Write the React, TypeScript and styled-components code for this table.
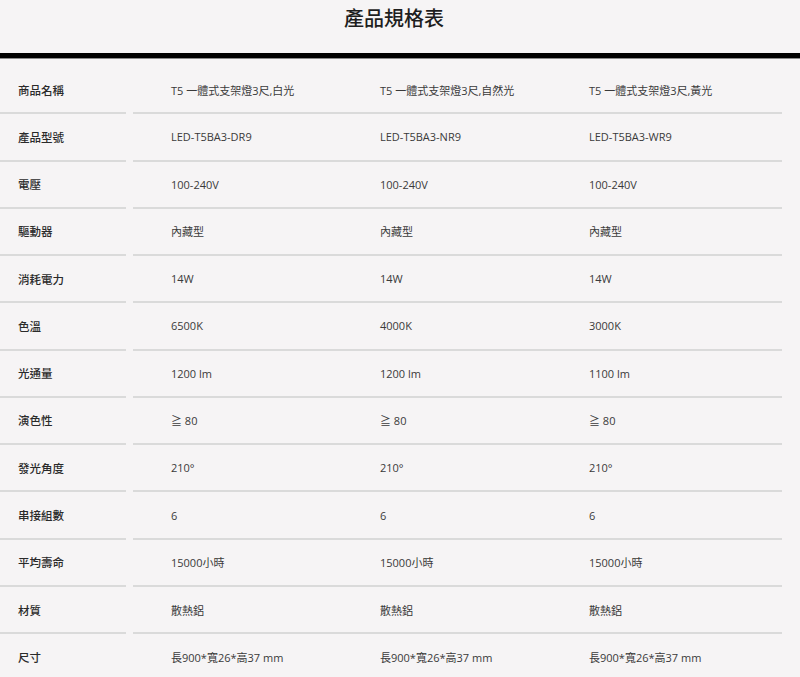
import React from "react";
import styled, { createGlobalStyle } from "styled-components";

const GlobalStyle = createGlobalStyle`
  html, body {
    margin: 0;
    padding: 0;
    background: #f6f4f5;
  }
  body {
    font-family: "Open Sans", "Noto Sans CJK TC", sans-serif;
    color: #333;
  }
`;

const Page = styled.div`
  width: 800px;
  display: flex;
  flex-direction: column;
`;

const Title = styled.h1`
  margin: 0 0 17px 0;
  height: 36px;
  line-height: 36px;
  width: 788px;
  text-align: center;
  font-family: "Noto Sans CJK TC", sans-serif;
  font-size: 20px;
  font-weight: 500;
  color: #1e1e1e;
`;

const Bar = styled.div`
  height: 5px;
  background: #000;
  border-bottom: 1px solid #8a8a8a;
`;

const Table = styled.div`
  margin-top: 8px;
  display: flex;
  flex-direction: column;
`;

const Row = styled.div`
  display: grid;
  grid-template-columns: 126px 649px;
  column-gap: 7px;
  height: 47.27px;
`;

const LabelCell = styled.div`
  display: flex;
  align-items: center;
  padding-left: 18px;
  border-bottom: 2px solid #dadada;
  font-family: "Noto Sans CJK TC", sans-serif;
  font-size: 11.5px;
  font-weight: 500;
  color: #2a2a2a;
`;

const DataGroup = styled.div`
  display: grid;
  grid-template-columns: repeat(3, 209px);
  padding-left: 38px;
  border-bottom: 2px solid #dadada;
`;

const DataCell = styled.div`
  display: flex;
  align-items: center;
  font-family: "Open Sans", "Noto Sans CJK TC", sans-serif;
  font-size: 11px;
  color: #3a3a3a;
  white-space: nowrap;
`;

const rows: [string, string[]][] = [
  ["商品名稱", ["T5 一體式支架燈3尺,白光", "T5 一體式支架燈3尺,自然光", "T5 一體式支架燈3尺,黃光"]],
  ["產品型號", ["LED-T5BA3-DR9", "LED-T5BA3-NR9", "LED-T5BA3-WR9"]],
  ["電壓", ["100-240V", "100-240V", "100-240V"]],
  ["驅動器", ["內藏型", "內藏型", "內藏型"]],
  ["消耗電力", ["14W", "14W", "14W"]],
  ["色溫", ["6500K", "4000K", "3000K"]],
  ["光通量", ["1200 lm", "1200 lm", "1100 lm"]],
  ["演色性", ["≧ 80", "≧ 80", "≧ 80"]],
  ["發光角度", ["210°", "210°", "210°"]],
  ["串接組數", ["6", "6", "6"]],
  ["平均壽命", ["15000小時", "15000小時", "15000小時"]],
  ["材質", ["散熱鋁", "散熱鋁", "散熱鋁"]],
  ["尺寸", ["長900*寬26*高37 mm", "長900*寬26*高37 mm", "長900*寬26*高37 mm"]],
];

export default function App() {
  return (
    <>
      <GlobalStyle />
      <Page>
        <Title>產品規格表</Title>
        <Bar />
        <Table>
          {rows.map(([label, values]) => (
            <Row key={label}>
              <LabelCell>{label}</LabelCell>
              <DataGroup>
                {values.map((v, i) => (
                  <DataCell key={i}>{v}</DataCell>
                ))}
              </DataGroup>
            </Row>
          ))}
        </Table>
      </Page>
    </>
  );
}
